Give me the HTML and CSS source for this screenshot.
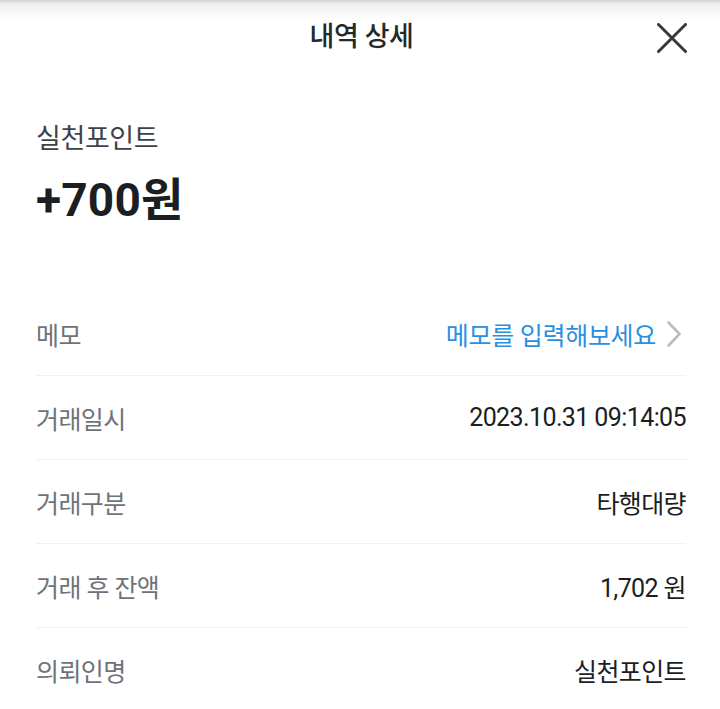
FILE: index.html
```html
<!DOCTYPE html>
<html lang="ko">
<head>
<meta charset="utf-8">
<title>내역 상세</title>
<link rel="stylesheet" href="styles.css">
</head>
<body>
<div class="screen">
  <header class="topbar">
    <span class="spacer"></span>
    <h1 class="title">내역 상세</h1>
    <button class="close" aria-label="닫기">
      <svg width="30" height="30" viewBox="0 0 30 30"><path d="M1.5 1.5 L28.5 28.5 M28.5 1.5 L1.5 28.5" stroke="#35383d" stroke-width="3" stroke-linecap="round" fill="none"/></svg>
    </button>
  </header>

  <section class="summary">
    <div class="source">실천포인트</div>
    <div class="amount">+700원</div>
  </section>

  <ul class="details">
    <li class="row">
      <span class="label">메모</span>
      <span class="value memo">메모를 입력해보세요
        <svg class="chev" width="14" height="26" viewBox="0 0 14 26"><path d="M1.5 1.5 L12.5 13 L1.5 24.5" stroke="#bcbcbc" stroke-width="2.6" fill="none" stroke-linecap="round" stroke-linejoin="round"/></svg>
      </span>
    </li>
    <li class="row">
      <span class="label">거래일시</span>
      <span class="value">2023.10.31 09:14:05</span>
    </li>
    <li class="row">
      <span class="label">거래구분</span>
      <span class="value">타행대량</span>
    </li>
    <li class="row">
      <span class="label">거래 후 잔액</span>
      <span class="value">1,702 원</span>
    </li>
    <li class="row">
      <span class="label">의뢰인명</span>
      <span class="value">실천포인트</span>
    </li>
  </ul>
</div>
</body>
</html>
```

FILE: styles.css
```css
* { box-sizing: border-box; }
html, body { margin: 0; padding: 0; background: #fff; }
body {
  font-family: "Roboto", "Noto Sans CJK KR", sans-serif;
  color: #1b1e22;
  width: 720px;
  height: 709px;
  overflow: hidden;
}
.screen { width: 720px; }

.topbar {
  height: 76px;
  display: grid;
  grid-template-columns: 1fr auto 1fr;
  align-items: center;
  padding: 0 33px 0 36px;
  background: linear-gradient(#cfcfcf 0px, #ececec 3px, #f6f6f6 10px, #fdfdfd 18px, #ffffff 22px);
}
.title {
  margin: 0 0 3px;
  font-size: 27px;
  line-height: 36px;
  font-weight: 500;
  color: #25282c;
  letter-spacing: -0.4px;
}
.close {
  justify-self: end;
  background: none;
  border: 0;
  padding: 0;
  width: 30px;
  height: 30px;
  display: flex;
  align-items: center;
  justify-content: center;
}

.summary {
  padding: 46px 36px 0;
}
.source {
  font-size: 27px;
  line-height: 34px;
  color: #3e4248;
  letter-spacing: -0.4px;
}
.amount {
  margin-top: 16px;
  font-size: 46px;
  line-height: 56px;
  font-weight: 700;
  color: #1b1e22;
  letter-spacing: 0.2px;
}

.details {
  list-style: none;
  margin: 64px 34px 0 36px;
  padding: 0;
}
.row {
  height: 84px;
  display: flex;
  align-items: center;
  justify-content: space-between;
  border-bottom: 1px solid #eff1f3;
  font-size: 25px;
  letter-spacing: -0.6px;
}
.row:last-child { border-bottom: 0; }
.label { color: #6e7379; }
.value { color: #1b1e22; }
.memo {
  color: #2b8fe0;
  display: flex;
  align-items: center;
  gap: 11px;
  letter-spacing: -0.3px;
}
.chev { display: block; margin-right: 5px; }
```
